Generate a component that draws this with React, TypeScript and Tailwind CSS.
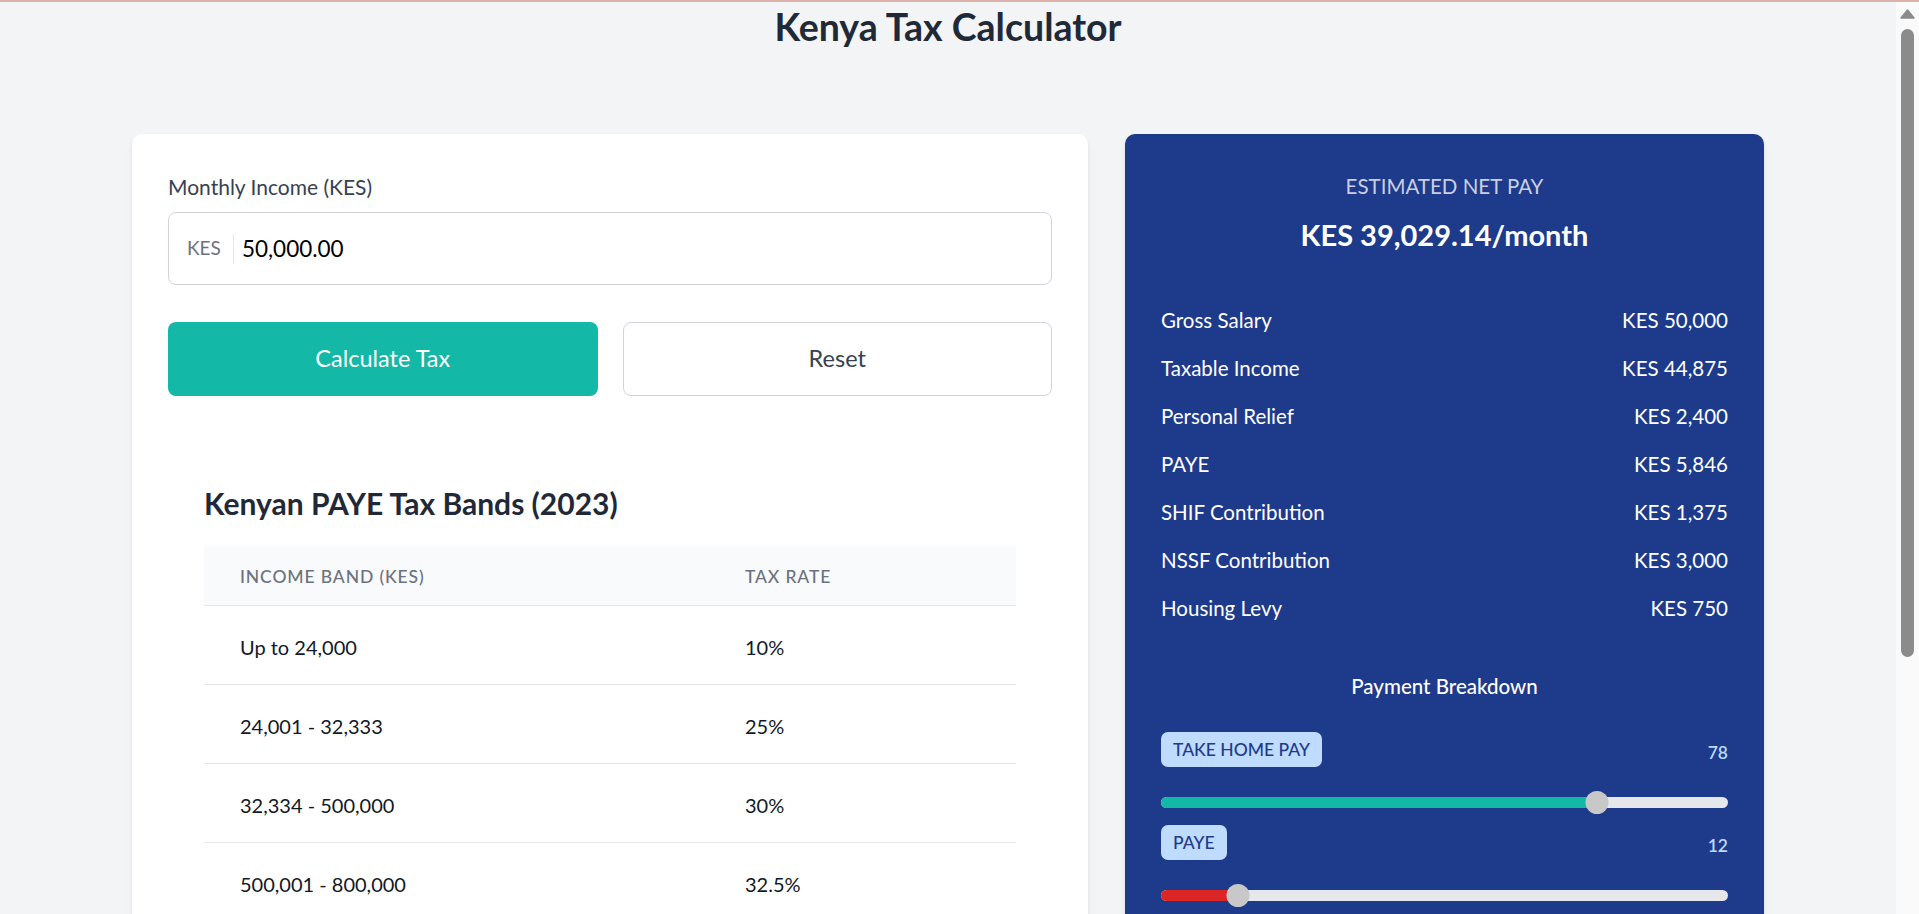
import React, { useState } from 'react';

const bands = [
    { band: 'Up to 24,000', rate: '10%' },
    { band: '24,001 - 32,333', rate: '25%' },
    { band: '32,334 - 500,000', rate: '30%' },
    { band: '500,001 - 800,000', rate: '32.5%' },
    { band: 'Above 800,000', rate: '35%' },
];

const summary = [
    { label: 'Gross Salary', value: 'KES 50,000' },
    { label: 'Taxable Income', value: 'KES 44,875' },
    { label: 'Personal Relief', value: 'KES 2,400' },
    { label: 'PAYE', value: 'KES 5,846' },
    { label: 'SHIF Contribution', value: 'KES 1,375' },
    { label: 'NSSF Contribution', value: 'KES 3,000' },
    { label: 'Housing Levy', value: 'KES 750' },
];

const breakdown = [
    { label: 'Take Home Pay', value: 78, fill: 'bg-[#14b8a6]' },
    { label: 'PAYE', value: 12, fill: 'bg-[#dc2626]' },
    { label: 'SHIF', value: 3, fill: 'bg-[#a855f7]' },
    { label: 'NSSF', value: 6, fill: 'bg-[#f59e0b]' },
    { label: 'Housing Levy', value: 2, fill: 'bg-[#3b82f6]' },
];

function Slider({ value, fill }: { value: number; fill: string }) {
    // thumb is 23px, its centre runs from 11.5px to width - 11.5px like a native range input
    const pos = `calc(11.5px + (100% - 23px) * ${value / 100})`;
    return (
        <div className="relative flex h-[23px] items-center">
            <div className="h-[11px] w-full overflow-hidden rounded-full bg-[#e5e7eb]">
                <div className={`h-full ${fill}`} style={{ width: pos }} />
            </div>
            <div
                className="absolute top-0 h-[23px] w-[23px] -translate-x-1/2 rounded-full bg-[#c8c8c8]"
                style={{ left: pos }}
            />
        </div>
    );
}

export default function App() {
    const [income, setIncome] = useState('50,000.00');

    return (
        <div className="flex h-screen flex-col bg-[#f3f4f6] font-['Lato',sans-serif]">
            <div className="h-[2px] shrink-0 bg-[#dcb2ab]" />
            <div className="flex min-h-0 flex-1">
                <main className="flex-1 overflow-hidden pt-[2px]">
                    <h1 className="text-center text-[37.5px] font-bold leading-[46px] text-[#1f2937]">
                        Kenya Tax Calculator
                    </h1>

                    <div className="mx-auto mt-[84px] grid w-[1632px] grid-cols-[956px_639px] items-start gap-[37px]">
                        {/* input + bands */}
                        <div className="rounded-[10px] bg-white px-[36px] pt-[38px] pb-[36px] shadow-md">
                            <label className="block text-[21px] leading-[30px] text-[#374151]">
                                Monthly Income (KES)
                            </label>
                            <div className="mt-[10px] flex h-[73px] items-center rounded-[8px] border border-[#d1d5db] pl-[18px] pr-4">
                                <span className="text-[19px] text-[#6b7280]">KES</span>
                                <span className="ml-[12px] mr-[8px] h-[30px] w-px bg-[#e5e7eb]" />
                                <input
                                    type="text"
                                    value={income}
                                    onChange={(e) => setIncome(e.target.value)}
                                    className="flex-1 bg-transparent text-[22.5px] text-black outline-none"
                                />
                            </div>

                            <div className="mt-[37px] grid grid-cols-2 gap-[25px]">
                                <button className="h-[74px] rounded-[8px] bg-[#14b8a6] text-[23.5px] text-white">
                                    Calculate Tax
                                </button>
                                <button
                                    onClick={() => setIncome('')}
                                    className="h-[74px] rounded-[8px] border border-[#d1d5db] bg-white text-[23.5px] text-[#374151]"
                                >
                                    Reset
                                </button>
                            </div>

                            <div className="mt-[53px] px-[36px] pt-[36px] pb-[36px]">
                                <h2 className="text-[30px] font-bold leading-[36px] text-[#1f2937]">
                                    Kenyan PAYE Tax Bands (2023)
                                </h2>
                                <div className="mt-[25px]">
                                    <div className="grid h-[60px] grid-cols-[505px_1fr] items-center border-b border-[#e5e7eb] bg-[#f9fafb] pt-[4px] text-[17.5px] font-medium uppercase tracking-wider text-[#6b7280]">
                                        <span className="px-[36px]">Income Band (KES)</span>
                                        <span className="px-[36px]">Tax Rate</span>
                                    </div>
                                    {bands.map((b) => (
                                        <div
                                            key={b.band}
                                            className="grid h-[79px] grid-cols-[505px_1fr] items-center border-b border-[#e5e7eb] pt-[4px] text-[20px] text-[#111827]"
                                        >
                                            <span className="px-[36px]">{b.band}</span>
                                            <span className="px-[36px]">{b.rate}</span>
                                        </div>
                                    ))}
                                </div>
                            </div>
                        </div>

                        {/* results */}
                        <div className="rounded-[10px] bg-[#1e3a8a] px-[36px] pt-[37px] pb-[40px] text-white shadow-md">
                            <p className="text-center text-[20.5px] uppercase leading-[30px] text-[#c9cfe4]">
                                Estimated Net Pay
                            </p>
                            <p className="mt-[14px] text-center text-[29px] font-bold leading-[40px]">
                                KES 39,029.14/month
                            </p>

                            <div className="mt-[50px] flex flex-col gap-[18px]">
                                {summary.map((row) => (
                                    <div key={row.label} className="flex justify-between text-[20.5px] leading-[30px]">
                                        <span>{row.label}</span>
                                        <span>{row.value}</span>
                                    </div>
                                ))}
                            </div>

                            <p className="mt-[48px] text-center text-[20.5px] font-medium leading-[30px]">
                                Payment Breakdown
                            </p>

                            <div className="mt-[31px] flex flex-col gap-[11px]">
                                {breakdown.map((item) => (
                                    <div key={item.label}>
                                        <div className="flex items-center justify-between">
                                            <span className="h-[35px] rounded-[7px] bg-[#bfdbfe] px-[12px] text-[17.5px] font-medium uppercase leading-[35px] text-[#1e3a8a]">
                                                {item.label}
                                            </span>
                                            <span className="pt-[7px] text-[17.5px] font-semibold text-[#bfdbfe]">
                                                {item.value}
                                            </span>
                                        </div>
                                        <div className="mt-[24px]">
                                            <Slider value={item.value} fill={item.fill} />
                                        </div>
                                    </div>
                                ))}
                            </div>
                        </div>
                    </div>
                </main>

                {/* page scrollbar */}
                <div className="flex w-[23px] shrink-0 flex-col items-center bg-[#fafafa]">
                    <svg className="mt-[7px] h-[10px] w-[15px]" viewBox="0 0 15 10">
                        <polygon points="7.5,1 14,9 1,9" fill="#8b8b8b" stroke="#8b8b8b" strokeLinejoin="round" strokeWidth="1.5" />
                    </svg>
                    <div className="mt-[10px] h-[628px] w-[13px] rounded-full bg-[#8b8b8b]" />
                </div>
            </div>
        </div>
    );
}
